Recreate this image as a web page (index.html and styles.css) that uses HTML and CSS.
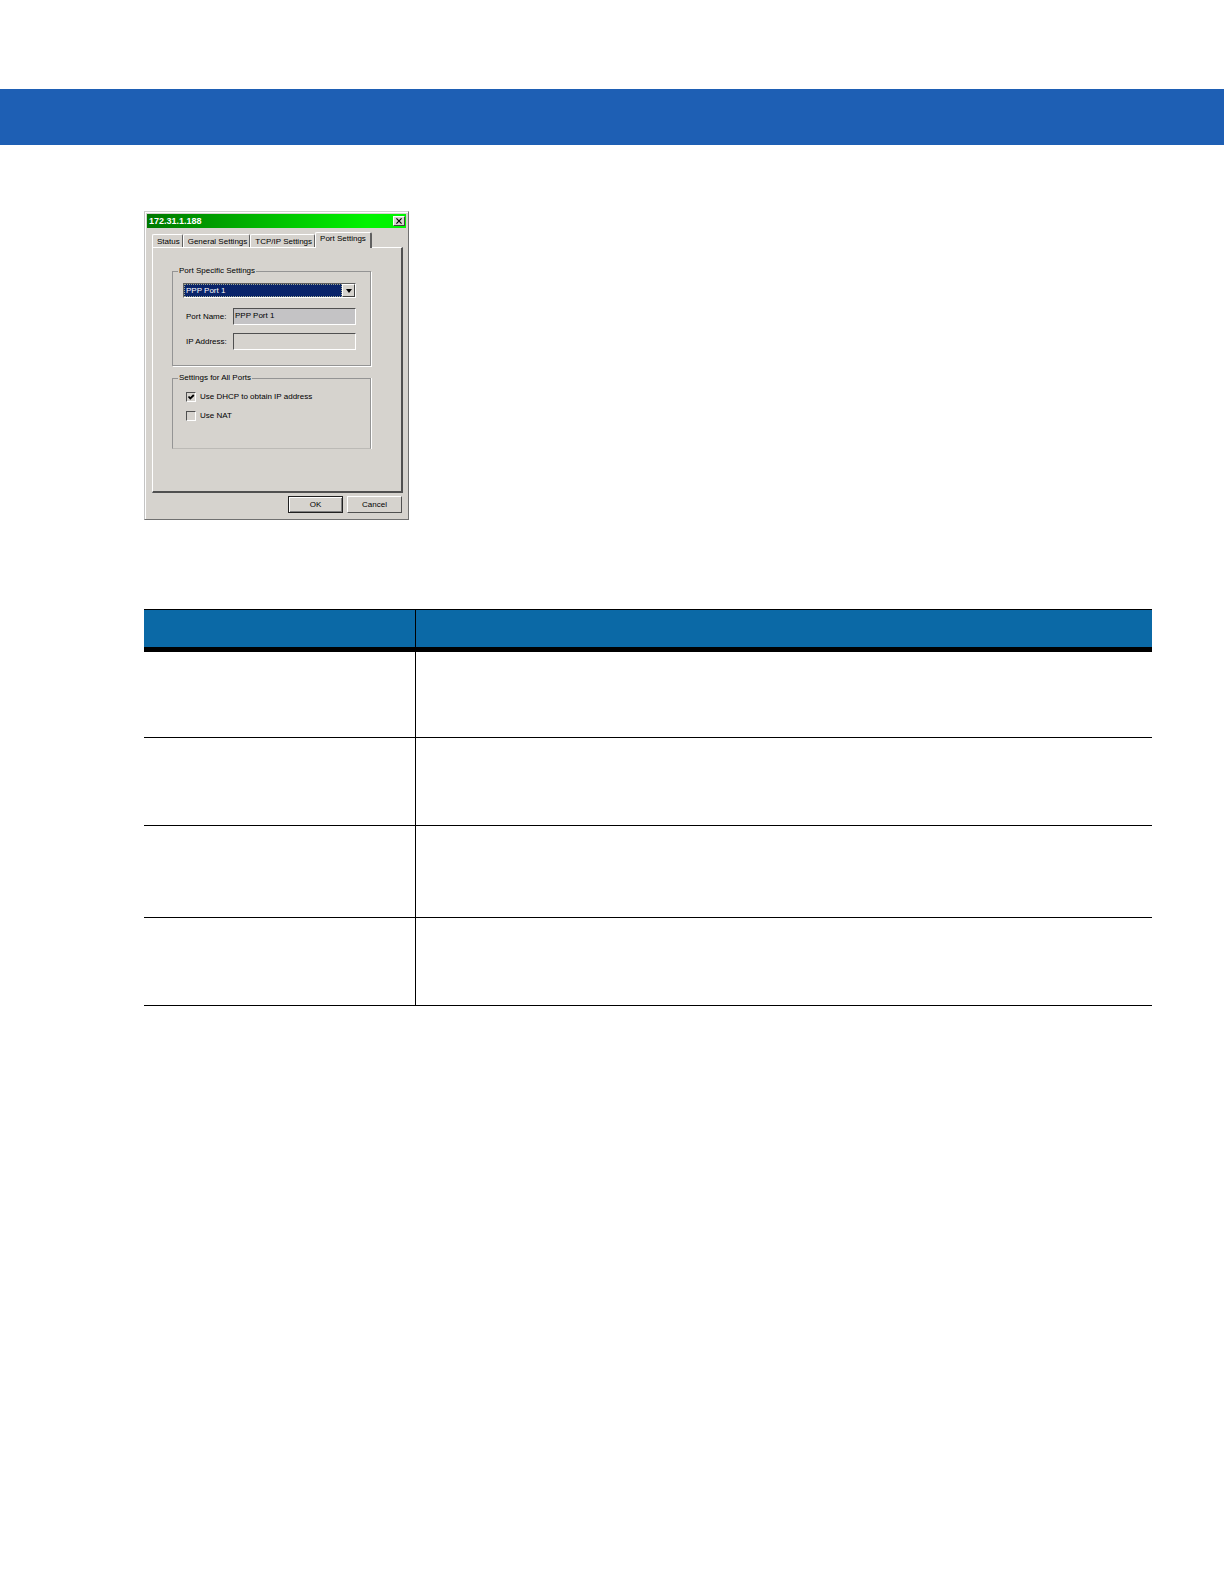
FILE: index.html
```
<!DOCTYPE html>
<html lang="en">
<head>
  <meta charset="UTF-8">
  <meta name="viewport" content="width=device-width, initial-scale=1.0">
  <title>Port Settings</title>
  <link rel="stylesheet" href="styles.css">
</head>
<body>

  <header class="banner"></header>

  <main class="content">

    <form class="dialog">
      <div class="title-bar">
        <span class="title">172.31.1.188</span>
        <button type="button" class="close" aria-label="Close">
          <svg width="6" height="6" viewBox="0 0 7 7"><path d="M0.5 0.5L6.5 6.5M6.5 0.5L0.5 6.5" stroke="#000" stroke-width="1.4"/></svg>
        </button>
      </div>

      <div class="tabs" role="tablist">
        <button type="button" class="tab" role="tab">Status</button>
        <button type="button" class="tab" role="tab">General Settings</button>
        <button type="button" class="tab" role="tab">TCP/IP Settings</button>
        <button type="button" class="tab active" role="tab" aria-selected="true">Port Settings</button>
      </div>

      <div class="panel" role="tabpanel">
        <fieldset class="group port-group">
          <legend>Port Specific Settings</legend>
          <div class="select-wrap">
            <select class="port-select" aria-label="Port">
              <option>PPP Port 1</option>
            </select>
            <span class="arrow"><svg width="6" height="4" viewBox="0 0 6 4"><path d="M0 0H6L3 4Z"/></svg></span>
          </div>
          <div class="field">
            <label for="portName">Port Name:</label>
            <input type="text" id="portName" class="filled" value="PPP Port 1">
          </div>
          <div class="field">
            <label for="ipAddress">IP Address:</label>
            <input type="text" id="ipAddress">
          </div>
        </fieldset>

        <fieldset class="group all-group">
          <legend>Settings for All Ports</legend>
          <div class="check">
            <input type="checkbox" id="dhcp" checked>
            <label for="dhcp">Use DHCP to obtain IP address</label>
          </div>
          <div class="check">
            <input type="checkbox" id="nat">
            <label for="nat">Use NAT</label>
          </div>
        </fieldset>
      </div>

      <div class="actions">
        <button type="button" class="btn default">OK</button>
        <button type="button" class="btn">Cancel</button>
      </div>
    </form>

    <table class="settings-table">
      <thead>
        <tr><th></th><th></th></tr>
      </thead>
      <tbody>
        <tr class="short"><td></td><td></td></tr>
        <tr><td></td><td></td></tr>
        <tr class="tall"><td></td><td></td></tr>
        <tr><td></td><td></td></tr>
      </tbody>
    </table>

  </main>

</body>
</html>
```
FILE: styles.css
```
* {
  box-sizing: border-box;
}

body {
  margin: 0;
  padding-top: 89px;
  background: #fff;
  color: #000;
  font-family: "Liberation Sans", Arial, sans-serif;
  font-size: 8px;
  line-height: 10px;
}

button, input, select {
  font: inherit;
  color: inherit;
  margin: 0;
  border-radius: 0;
}

.banner {
  height: 56px;
  background: #1e5fb4;
}

.content {
  padding: 66px 72px 40px 144px;
}

/* Dialog window */
.dialog {
  width: 265px;
  padding: 2px;
  background: #d6d3ce;
  border: 1px solid;
  border-color: #d0d0d0 #707070 #707070 #c4c4c4;
  box-shadow: inset 1px 1px #fff;
}

.title-bar {
  display: flex;
  align-items: center;
  justify-content: space-between;
  height: 14px;
  padding: 0 1px 0 2px;
  background: linear-gradient(to right, #007800, #00f400 85%);
}

.title {
  color: #fff;
  font-size: 9px;
  font-weight: bold;
}

.close {
  display: flex;
  align-items: center;
  justify-content: center;
  width: 12px;
  height: 10px;
  padding: 0;
  background: #d6d3ce;
  border: 1px solid;
  border-color: #fff #404040 #404040 #fff;
}

/* Tabs */
.tabs {
  display: flex;
  align-items: flex-end;
  padding: 4px 5px 0;
}

.tab {
  height: 13px;
  padding: 1px 2px 0 4px;
  background: none;
  border: 1px solid;
  border-color: #fff #606060 transparent #fff;
  border-bottom: 0;
  border-radius: 2px 2px 0 0;
  white-space: nowrap;
}

.tab.active {
  position: relative;
  height: 16px;
  margin-bottom: -1px;
  padding: 0 4px 3px;
  background: #d6d3ce;
  border-right-width: 2px;
}

/* Panel */
.panel {
  display: flex;
  flex-direction: column;
  gap: 7px;
  margin: 0 3px 0 5px;
  padding: 18px 30px 42px 19px;
  border: 1px solid;
  border-color: #fff #505050 #505050 #fff;
  border-right-width: 2px;
  border-bottom-width: 2px;
}

.group {
  min-width: 0;
  margin: 0;
  padding: 0 14px 0 10px;
  border: 1px solid #949494;
  box-shadow: 1px 1px #fff;
}

.group legend {
  margin-left: -5px;
  padding: 0 1px;
}

.port-group {
  height: 100px;
}

.all-group {
  height: 76px;
  border-bottom-color: #bcbab6;
  box-shadow: 1px 0 #fff;
}

.select-wrap {
  display: flex;
  height: 15px;
  margin: 7px 0 10px;
  border: 1px solid;
  border-color: #606060 #fff #fff #606060;
}

.port-select {
  flex: 1;
  appearance: none;
  padding: 0 1px;
  background: #0a246a;
  color: #fff;
  border: 1px dotted #a0a890;
  outline: none;
}

.arrow {
  display: flex;
  align-items: center;
  justify-content: center;
  width: 13px;
  background: #d6d3ce;
  border: 1px solid;
  border-color: #fff #404040 #404040 #fff;
}

.field {
  display: flex;
  align-items: center;
  justify-content: space-between;
  margin-bottom: 8px;
}

.field label {
  padding-left: 3px;
}

.field input {
  width: 123px;
  height: 17px;
  padding: 0 1px 2px;
  background: #d6d3ce;
  border: 1px solid;
  border-color: #505050 #fff #fff #505050;
}

.field .filled {
  background: #c4c3c5;
}

.check {
  display: flex;
  align-items: center;
  gap: 4px;
  height: 10px;
  margin: 9px 3px;
}

.check input {
  appearance: none;
  width: 10px;
  height: 10px;
  border: 1px solid;
  border-color: #505050 #fff #fff #505050;
}

.check input:checked {
  background: url("data:image/svg+xml,%3Csvg xmlns='http://www.w3.org/2000/svg' viewBox='0 0 8 8'%3E%3Cpath d='M1.5 3.5L3.3 5.5L6.8 2' fill='none' stroke='%23000' stroke-width='1.8'/%3E%3C/svg%3E") center / 8px 8px no-repeat;
}

.actions {
  display: flex;
  justify-content: flex-end;
  gap: 4px;
  padding: 3px 4px 4px;
}

.btn {
  width: 55px;
  height: 17px;
  padding: 0;
  background: #d6d3ce;
  border: 1px solid;
  border-color: #fff #505050 #505050 #fff;
}

.btn.default {
  border-color: #202020;
  box-shadow: inset 1px 1px #fff, inset -1px -1px #808080;
}

/* Settings table */
.settings-table {
  width: 100%;
  margin-top: 89px;
  table-layout: fixed;
  border-spacing: 0;
}

.settings-table th,
.settings-table td {
  padding: 0;
  border-bottom: 1px solid #000;
}

.settings-table th {
  height: 43px;
  background: #0b69a6;
  border-top: 1px solid #000;
  border-bottom-width: 5px;
}

.settings-table td {
  height: 88px;
}

.settings-table .short td {
  height: 86px;
}

.settings-table .tall td {
  height: 92px;
}

.settings-table th:first-child,
.settings-table td:first-child {
  width: 27%;
  border-right: 1px solid #000;
}
```
